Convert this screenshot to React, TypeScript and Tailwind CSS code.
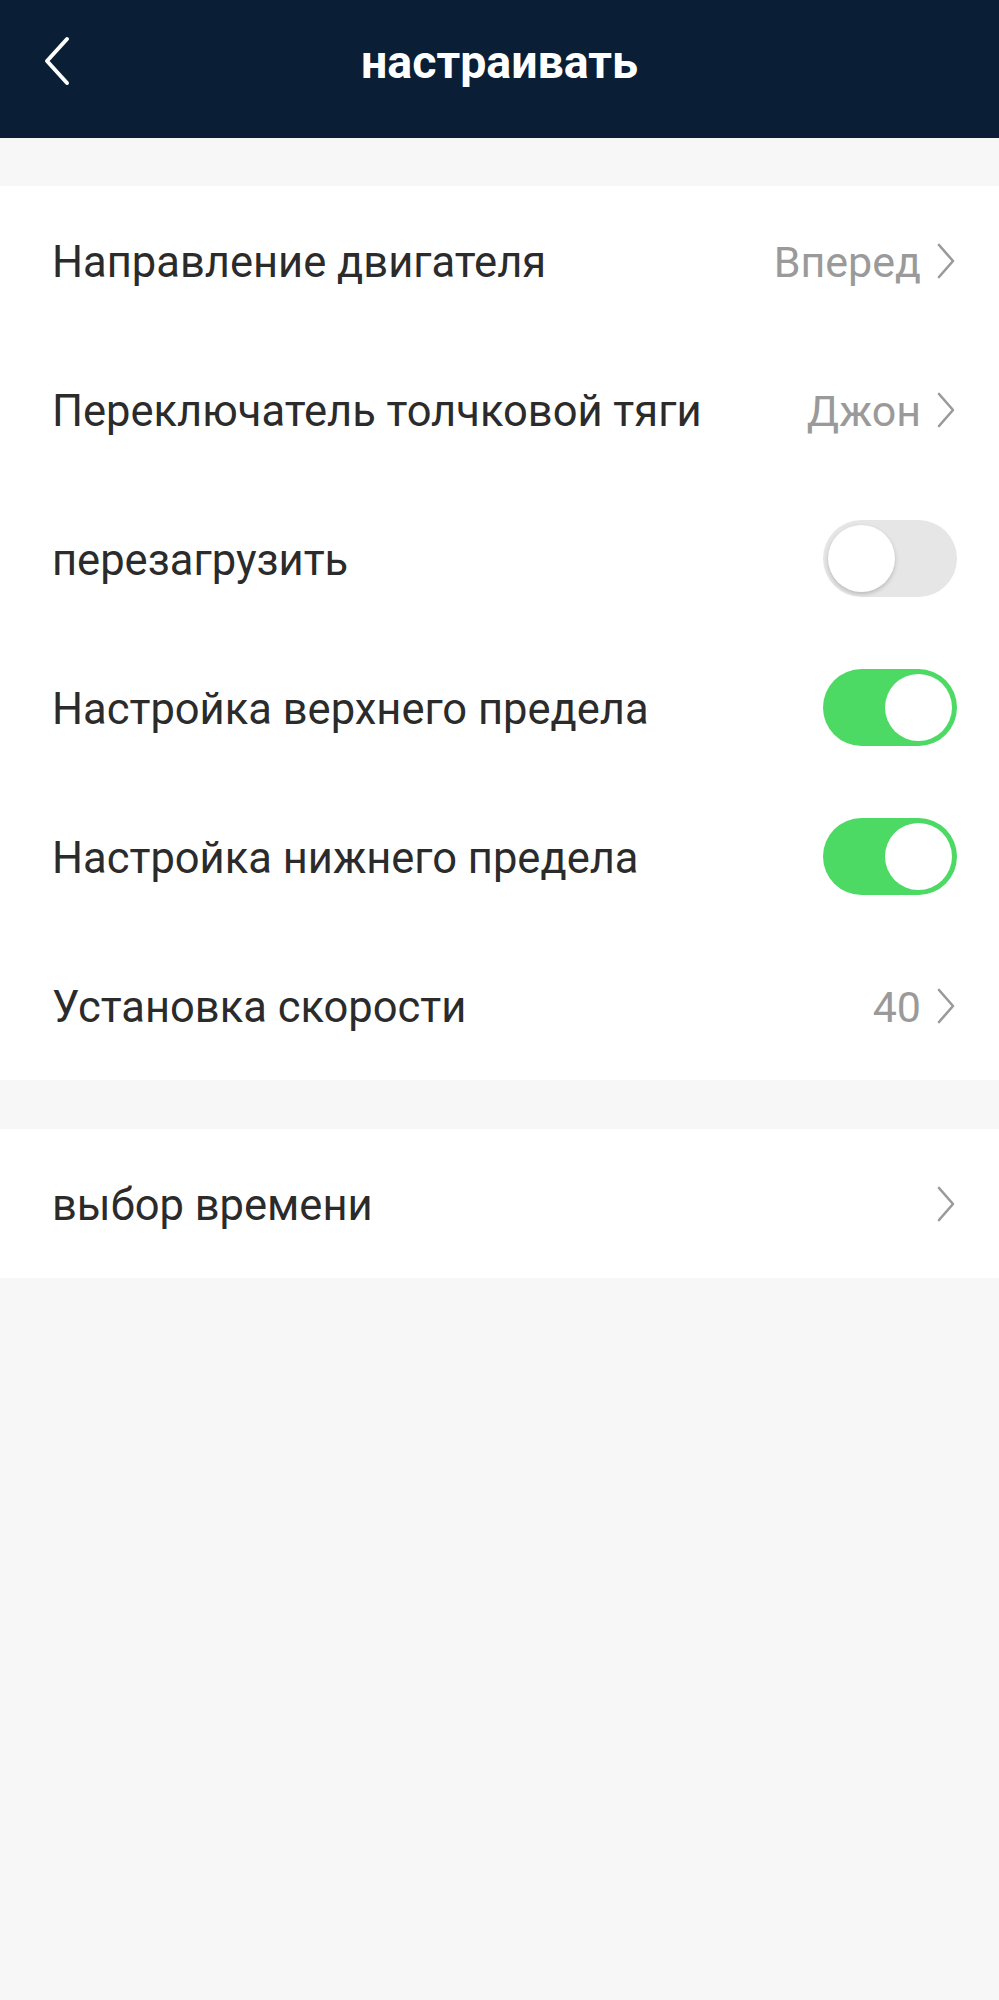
import { ReactNode } from "react";

function Chevron() {
    return (
        <svg className="w-[22px] h-[36px] text-[#9a9a9a]" viewBox="0 0 22 36" fill="none" stroke="currentColor">
            <path d="M4 2l14 16L4 34" strokeWidth={2.6} strokeLinecap="round" strokeLinejoin="round" />
        </svg>
    );
}

function Toggle({ on }: { on: boolean }) {
    if (on) {
        return (
            <div className="w-[134px] h-[77px] rounded-full bg-[#4cd964] flex items-center justify-end pr-[5px]">
                <div className="w-[67px] h-[67px] rounded-full bg-white" />
            </div>
        );
    }
    return (
        <div className="w-[134px] h-[77px] rounded-full bg-[#e6e6e6] flex items-center pl-[5px]">
            <div className="w-[67px] h-[67px] rounded-full bg-white shadow-[0_2px_4px_rgba(0,0,0,0.2)]" />
        </div>
    );
}

function Row({ label, right }: { label: string; right: ReactNode }) {
    return (
        <div className="h-[149px] flex items-center justify-between pl-[52px] pr-[42px]">
            <span className="text-[43.5px] text-[#2b2b2b] mt-[4px]">{label}</span>
            {right}
        </div>
    );
}

function Value({ text }: { text?: string }) {
    return (
        <div className="flex items-center gap-[14px]">
            {text && <span className="text-[43px] text-[#9a9a9a] mt-[4px]">{text}</span>}
            <Chevron />
        </div>
    );
}

export default function App() {
    return (
        <div className="min-h-[2000px] bg-[#f7f7f7]" style={{ fontFamily: "Roboto, 'Noto Sans', sans-serif" }}>
            <header className="h-[138px] bg-[#0a1f35] flex items-center justify-center relative">
                <svg className="absolute left-[42px] top-[36px] w-[30px] h-[50px]" viewBox="0 0 30 50" fill="none" stroke="white">
                    <path d="M25 3L5 25l20 22" strokeWidth={4} strokeLinecap="round" strokeLinejoin="round" />
                </svg>
                <h1 className="text-white text-[46.5px] font-bold -mt-[12px]">настраивать</h1>
            </header>
            <div className="h-[48px]" />
            <section className="bg-white">
                <Row label="Направление двигателя" right={<Value text="Вперед" />} />
                <Row label="Переключатель толчковой тяги" right={<Value text="Джон" />} />
                <Row label="перезагрузить" right={<Toggle on={false} />} />
                <Row label="Настройка верхнего предела" right={<Toggle on />} />
                <Row label="Настройка нижнего предела" right={<Toggle on />} />
                <Row label="Установка скорости" right={<Value text="40" />} />
            </section>
            <div className="h-[49px]" />
            <section className="bg-white">
                <Row label="выбор времени" right={<Value />} />
            </section>
        </div>
    );
}
